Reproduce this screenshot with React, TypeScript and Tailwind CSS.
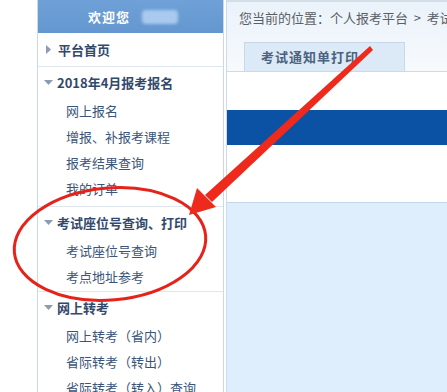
import React from 'react';

type Section = {
  title: string;
  open: boolean;
  items: string[];
  pb: string;
};

const sections: Section[] = [
  { title: '2018年4月报考报名', open: true, items: ['网上报名', '增报、补报考课程', '报考结果查询', '我的订单'], pb: 'pb-[4px]' },
  { title: '考试座位号查询、打印', open: true, items: ['考试座位号查询', '考点地址参考'], pb: 'pb-[1px]' },
  { title: '网上转考', open: true, items: ['网上转考（省内）', '省际转考（转出）', '省际转考（转入）查询'], pb: 'pb-0' },
];

const font = { fontFamily: '"Noto Sans CJK SC", "Liberation Sans", sans-serif' };

function Arrow({ open }: { open: boolean }) {
  return open ? (
    <svg width="9" height="6" viewBox="0 0 9 6" className="shrink-0">
      <path d="M0 0 L9 0 L4.5 5 Z" fill="#8a9bb3" />
    </svg>
  ) : (
    <svg width="6" height="9" viewBox="0 0 6 9" className="shrink-0">
      <path d="M0 0 L5 4.5 L0 9 Z" fill="#8a9bb3" />
    </svg>
  );
}

function Sidebar() {
  return (
    <aside className="w-[187px] shrink-0 border-l border-r border-[#c9d9ea] bg-white">
      <div className="h-[33px] bg-gradient-to-b from-[#6fa1d8] to-[#6497cf] flex items-center pl-[50px] gap-[12px]">
        <span className="text-white font-bold text-[13px] tracking-[1px]">欢迎您</span>
        <span className="w-[36px] h-[14px] bg-[#a9c9ee] blur-[1.5px] rounded-sm" />
      </div>
      <div className="h-[34px] border-b border-[#dfe6ee] flex items-center pl-[8px] gap-[6px]">
        <Arrow open={false} />
        <span className="text-[13px] font-bold text-[#33496b]">平台首页</span>
      </div>
      {sections.map((s, i) => (
        <div key={s.title} className={`${i < sections.length - 1 ? 'border-b border-[#dfe6ee]' : ''} ${s.pb}`}>
          <div className="h-[31px] flex items-center pl-[6px] gap-[4px]">
            <Arrow open={s.open} />
            <span className="text-[13px] font-bold text-[#33496b]">{s.title}</span>
          </div>
          {s.items.map((it) => (
            <div key={it} className="h-[26px] flex items-center pl-[28px] text-[13px] text-[#3b5578] whitespace-nowrap">
              {it}
            </div>
          ))}
        </div>
      ))}
    </aside>
  );
}

function Main() {
  return (
    <main className="flex-1 ml-[2px] border-l border-[#c9dbee] flex flex-col min-w-0">
      <div className="border-t-2 border-[#d2dde8] bg-gradient-to-b from-[#eaf2fa] to-[#f7fafd]">
        <div className="h-[31px] flex items-center pl-[12px] text-[13px] text-[#5a5f66] whitespace-nowrap overflow-hidden">
          您当前的位置：个人报考平台&nbsp;&nbsp;&gt;&nbsp;&nbsp;考试通知单打印
        </div>
        <div className="h-[39px] flex items-end pl-[17px] border-b border-[#c9dbee]">
          <div className="w-[161px] h-[29px] border border-b-0 border-[#c5d8ec] bg-[#dce9f6] flex items-center pl-[16px]">
            <span className="text-[13px] font-bold text-[#4b6280] tracking-[1px]">考试通知单打印</span>
          </div>
        </div>
      </div>
      <div className="h-[38px] bg-white" />
      <div className="h-[35px] bg-[#0b52a4]" />
      <div className="h-[57px] bg-white" />
      <div className="flex-1 border-t border-[#c4d6ea] bg-[#deeefd]" />
    </main>
  );
}

export default function App() {
  return (
    <div className="relative w-[447px] h-[392px] overflow-hidden bg-white flex" style={font}>
      <div className="w-[37px] shrink-0" />
      <Sidebar />
      <Main />
      <svg className="absolute inset-0 pointer-events-none" width="447" height="392" viewBox="0 0 447 392">
        <ellipse cx="110" cy="244" rx="96" ry="56" transform="rotate(-5 110 244)" fill="none" stroke="#e5231b" strokeWidth="3" />
        <polygon points="370,46 373,50 212,202 205,195" fill="#ee2a1c" />
        <polygon points="189,215 197,188 216,207" fill="#ee2a1c" />
      </svg>
    </div>
  );
}
